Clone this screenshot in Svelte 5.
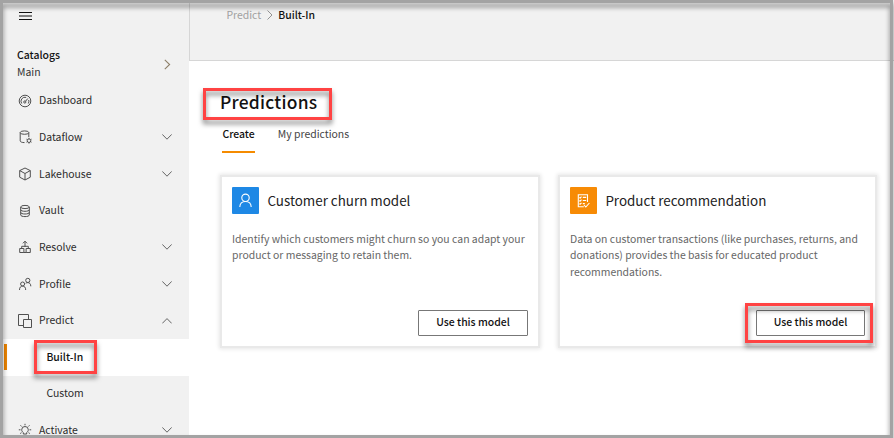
<script>
  const items = [
    { label: 'Dashboard', icon: 'gauge' },
    { label: 'Dataflow', icon: 'dataflow', chevron: 'down' },
    { label: 'Lakehouse', icon: 'cube', chevron: 'down' },
    { label: 'Vault', icon: 'vault' },
    { label: 'Resolve', icon: 'resolve', chevron: 'down' },
    { label: 'Profile', icon: 'people', chevron: 'down' },
    { label: 'Predict', icon: 'squares', chevron: 'up' },
    { label: 'Built-In', sub: true, active: true },
    { label: 'Custom', sub: true },
    { label: 'Activate', icon: 'bulb', chevron: 'down' }
  ];
  const cards = [
    {
      title: 'Customer churn model',
      icon: 'person',
      lines: ['Identify which customers might churn so you can adapt your', 'product or messaging to retain them.']
    },
    {
      title: 'Product recommendation',
      icon: 'list',
      lines: [
        'Data on customer transactions (like purchases, returns, and',
        'donations) provides the basis for educated product',
        'recommendations.'
      ]
    }
  ];
</script>

<div class="app">
  <aside>
    <svg class="burger" width="14" height="8" viewBox="0 0 14 8"><path d="M0 .5h13M0 4h13M0 7.5h13" stroke="#111" fill="none" /></svg>
    <div class="catalog">
      <div>
        <div class="cat-title">Catalogs</div>
        <div class="cat-name">Main</div>
      </div>
      <svg width="7" height="11" viewBox="0 0 7 11"><path d="M.8.8 5.6 5.5.8 10.2" stroke="#8d7f68" fill="none" stroke-width="1.1" /></svg>
    </div>
    <nav>
      {#each items as item}
        <div class="row" class:sub={item.sub} class:active={item.active}>
          {#if item.icon}
            <svg class="ico" width="14" height="14" viewBox="0 0 14 14" fill="none" stroke="#505050" stroke-width="1">
              {#if item.icon === 'gauge'}
                <circle cx="7" cy="7" r="5.8" />
                <circle cx="6.8" cy="8" r="1.1" />
                <path d="M7.6 7.2 9.8 4.5M3.7 9.5A4 4 0 0 1 8.2 3.4M10.7 6A4 4 0 0 1 10.3 9.5" />
              {:else if item.icon === 'dataflow'}
                <ellipse cx="6.5" cy="2.6" rx="4.3" ry="1.7" />
                <path d="M2.2 2.6v8.3c0 1 1.8 1.7 4.3 1.7M10.8 2.6V7" />
                <circle cx="11" cy="10.7" r="1.8" />
                <path d="M11 7.8v1M11 12.6v1M8.5 9.2l.9.5M12.6 11.7l.9.5M8.5 12.2l.9-.5M12.6 9.7l.9-.5" />
              {:else if item.icon === 'cube'}
                <path d="M7 1 12.3 3.6v6.6L7 13 1.7 10.2V3.6ZM1.7 3.6 7 6.5l5.3-2.9M7 6.5V13" />
              {:else if item.icon === 'vault'}
                <ellipse cx="7" cy="3" rx="4.3" ry="1.6" />
                <path d="M2.7 3v8c0 1 2 1.6 4.3 1.6s4.3-.6 4.3-1.6V3M2.7 5.7c0 1 2 1.6 4.3 1.6s4.3-.6 4.3-1.6M2.7 8.4C2.7 9.4 4.7 10 7 10s4.3-.6 4.3-1.6" />
              {:else if item.icon === 'resolve'}
                <path d="M1.7 8.5h4.2v4H1.7zM8.1 8.5h4.2v4H8.1zM3.7 8.5V6.3h6.6v2.2M7 7V1.3M4.9 3.3 7 1.2l2.1 2.1M5.9 12.5h2.2" />
              {:else if item.icon === 'people'}
                <circle cx="4.6" cy="7" r="2" />
                <circle cx="9.8" cy="3.4" r="2.1" />
                <path d="M1.5 13c0-2.6 1.2-3.9 3.1-3.9S7.7 10.4 7.7 13M7.7 6.3c.6-.5 1.3-.7 2.1-.7 1.9 0 3 1.3 3 3.7" />
              {:else if item.icon === 'squares'}
                <path d="M5.5 11.5h-5v-11h10v5M5.5 5.5h8v8h-8z" />
              {:else}
                <path d="M5.3 11V9.5C4.3 8.8 3.7 8 3.7 6.8a3.3 3.3 0 0 1 6.6 0c0 1.2-.6 2-1.6 2.7V11zM5.5 12.7h3M7 .8v1.5M.8 6.8h1.7M11.5 6.8h1.7M2.5 2.3l1.2 1.2M11.5 2.3l-1.2 1.2M2.2 10.5l1.3-.8M11.8 10.5l-1.3-.8" />
              {/if}
            </svg>
          {/if}
          <span class="lbl">{item.label}</span>
          {#if item.chevron}
            <svg width="10" height="6" viewBox="0 0 10 6" fill="none" stroke="#555" stroke-width=".9">
              <path d={item.chevron === 'down' ? 'M.3.4 5 5.2 9.7.4' : 'M.3 5.4 5 .6l4.7 4.8'} />
            </svg>
          {/if}
        </div>
      {/each}
    </nav>
  </aside>
  <main>
    <header>
      <span class="crumb">Predict</span>
      <svg width="6" height="10" viewBox="0 0 6 10"><path d="M.5.5 5 5 .5 9.5" stroke="#888" fill="none" stroke-width=".9" /></svg>
      <span class="here">Built-In</span>
    </header>
    <h1>Predictions</h1>
    <div class="tabs">
      <span class="tab on">Create</span>
      <span class="tab">My predictions</span>
    </div>
    <div class="cards">
      {#each cards as card}
        <section class={card.icon + '-card'}>
          <div class="head">
            <div class="tile {card.icon}">
              {#if card.icon === 'person'}
                <svg width="13" height="15" viewBox="0 0 13 15" fill="none" stroke="#fff" stroke-width="1.1">
                  <circle cx="6.5" cy="4.8" r="3.7" />
                  <path d="M.8 14c.1-3.3 2.3-5.5 5.7-5.5s5.6 2.2 5.7 5.5" />
                </svg>
              {:else}
                <svg width="13" height="14" viewBox="0 0 13 14" fill="none" stroke="#fff" stroke-width="1.1">
                  <path d="M10.5 8V.7H1.3v12.1h5.5M5.8 3.4h3.4M5.8 6.5h3.4M5.8 9.6h2M2.4 3.4l.7.7 1.4-1.5M2.4 6.5l.7.7 1.4-1.5M2.4 9.6l.7.7 1.4-1.5M7 11l1.8 2 3.6-4" />
                </svg>
              {/if}
            </div>
            <h2>{card.title}</h2>
          </div>
          <p>
            {#each card.lines as line}<span>{line}</span>{/each}
          </p>
          <button>Use this model</button>
        </section>
      {/each}
    </div>
  </main>
  <div class="mark m1"></div>
  <div class="mark m2"></div>
  <div class="mark m3"></div>
  <div class="frame"></div>
</div>

<style>
  .app {
    position: relative;
    width: 894px;
    height: 438px;
    overflow: hidden;
    display: flex;
    background: #fff;
    color: #222;
    font-family: 'Noto Sans CJK SC', 'Noto Sans', sans-serif;
    font-size: 10.45px;
  }
  aside {
    width: 189px;
    height: 438px;
    flex: none;
    box-sizing: border-box;
    background: #f1f1f1;
    padding-top: 12px;
    display: flex;
    flex-direction: column;
  }
  .burger { margin-left: 19px; flex: none; display: block; }
  .catalog {
    height: 34px;
    margin: 27px 18px 0 17px;
    display: flex;
    align-items: center;
    justify-content: space-between;
    line-height: 17px;
    flex: none;
  }
  .catalog > div { margin-top: -2px; }
  .catalog svg { margin-top: 1px; }
  .cat-title { font-weight: 500; color: #111; }
  .cat-name { color: #333; }
  nav { margin-top: 1.4px; flex: none; }
  .row {
    height: 36.65px;
    box-sizing: border-box;
    padding: 0 17px 0 18px;
    display: flex;
    align-items: center;
  }
  .ico { margin-right: 7px; flex: none; }
  .lbl { flex: 1; line-height: 16px; padding-bottom: 0.7px; color: #2b2b2b; }
  .sub { padding-left: 46.4px; }
  .active {
    background: linear-gradient(#ee8500, #ee8500) 4px 50% / 3px 26px no-repeat #fff;
  }
  .active .lbl { font-weight: 500; color: #111; }
  main { flex: 1; min-width: 0; display: flex; flex-direction: column; align-items: flex-start; }
  header {
    width: 100%;
    height: 61px;
    box-sizing: border-box;
    border-left: 1px solid #d6d6d6;
    border-bottom: 1px solid #d6d6d6;
    background: #f1f1f1;
    padding: 7px 0 0 36.4px;
    display: flex;
    align-items: flex-start;
    line-height: 16px;
    flex: none;
  }
  header svg { margin: 3px 5px 0 6px; }
  .crumb { color: #a0a0a0; }
  .here { font-weight: 500; color: #111; }
  h1 {
    margin: 27px 0 0 31px;
    font-size: 17.4px;
    letter-spacing: 0.25px;
    line-height: 28px;
    font-weight: 500;
    color: #111;
  }
  .tabs { display: flex; gap: 23px; margin: 10px 0 0 33.4px; height: 27px; }
  .tab { line-height: 16px; color: #444; }
  .on { font-weight: 500; color: #111; border-bottom: 2px solid #f58b00; box-sizing: border-box; }
  .cards { display: flex; gap: 22px; margin: 24px 0 0 33px; }
  section {
    width: 316px;
    height: 169px;
    box-sizing: border-box;
    padding: 10px;
    background: #fff;
    box-shadow: 0 0 0 2px #e9e9e9, 0 0 4px 3px rgba(0, 0, 0, 0.1);
    display: flex;
    flex-direction: column;
  }
  .list-card { width: 315px; }
  .head { display: flex; align-items: center; height: 27px; }
  .tile {
    width: 27px;
    height: 27px;
    border-radius: 1px;
    display: flex;
    align-items: center;
    justify-content: center;
  }
  .person { background: #1e88e5; }
  .list { background: #f78b05; }
  h2 { margin: -1px 0 0 8.4px; font-size: 13.4px; line-height: 24px; font-weight: 400; color: #222; }
  p { margin: 17px 0 0; color: #666; line-height: 16.4px; }
  p span { display: block; white-space: nowrap; }
  button {
    margin: auto 0 0 auto;
    width: 110px;
    height: 26px;
    padding: 0 0 2px;
    border: 1px solid #777;
    border-radius: 1px;
    background: #fff;
    color: #111;
    font: 500 10.45px/16px 'Noto Sans CJK SC', 'Noto Sans', sans-serif;
  }
  .list-card button { width: 109px; }
  .mark {
    position: absolute;
    box-sizing: border-box;
    border: 3px solid #ff4343;
    filter: drop-shadow(0 4px 2.5px rgba(0, 0, 0, 0.5));
  }
  .m1 { left: 203px; top: 88px; width: 129px; height: 32px; }
  .m2 { left: 34px; top: 340px; width: 63px; height: 34px; }
  .m3 { left: 745px; top: 303px; width: 128px; height: 40px; }
  .frame {
    position: absolute;
    inset: 0 1px 0 0;
    border: 3px solid #a3a3a3;
    filter: drop-shadow(0 4px 2.5px rgba(0, 0, 0, 0.5));
  }
</style>
